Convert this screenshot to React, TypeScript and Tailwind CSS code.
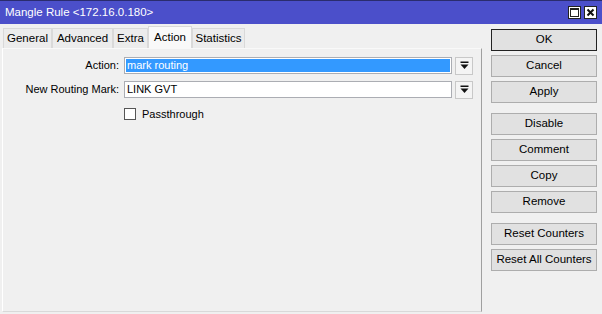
import React from "react";

const tabs: [string, string][] = [
  ["General", "w-[49px]"],
  ["Advanced", "w-[61px]"],
  ["Extra", "w-[35px]"],
  ["Action", "w-[44px]"],
  ["Statistics", "w-[53px]"],
];

function DropArrow() {
  return (
    <div className="w-[18px] h-[18px] ml-[3px] flex items-center justify-center border border-[#c8c8c8] bg-[#f4f4f4]">
      <svg width="9" height="9" viewBox="0 0 9 9">
        <rect x="0.5" y="0.5" width="8" height="1.5" fill="#111" />
        <polygon points="0.5,3.5 8.5,3.5 4.5,8" fill="#111" />
      </svg>
    </div>
  );
}

function Btn({ label, primary }: { label: string; primary?: boolean }) {
  return (
    <button
      className={`w-[106px] h-[22px] flex items-center justify-center bg-[#e1e1e1] text-[11.5px] text-black ${
        primary ? "border-[1.5px] border-[#222]" : "border border-[#adadad]"
      }`}
    >
      {label}
    </button>
  );
}

export default function App() {
  return (
    <div
      className="w-[602px] h-[314px] bg-[#f0f0f0] flex flex-col overflow-hidden text-black"
      style={{ fontFamily: '"Liberation Sans", Arial, sans-serif' }}
    >
      {/* title bar */}
      <div className="h-[24px] bg-[#4b4fca] border-t border-[#2a2c6e] flex items-center pl-[5px] pr-[5px] shrink-0">
        <span className="text-white text-[11.5px] leading-none">Mangle Rule &lt;172.16.0.180&gt;</span>
        <div className="ml-auto flex gap-[3px] items-center">
          <div className="w-[13px] h-[13px] bg-white border border-[#222] flex items-center justify-center">
            <div className="w-[9px] h-[9px] border border-[#222] border-t-2" />
          </div>
          <div className="w-[13px] h-[13px] bg-white border border-[#222] flex items-center justify-center">
            <svg width="9" height="9" viewBox="0 0 9 9">
              <path d="M1.5 1.5 L7.5 7.5 M7.5 1.5 L1.5 7.5" stroke="#111" strokeWidth="2" />
            </svg>
          </div>
        </div>
      </div>

      <div className="flex flex-1">
        {/* left: tabs + panel */}
        <div className="w-[480px] ml-[2px] flex flex-col">
          <div className="h-[24px] flex items-end pl-[1px]">
            {tabs.map(([t, w]) =>
              t === "Action" ? (
                <div
                  key={t}
                  className={`${w} h-[22px] flex items-center justify-center bg-[#f9f9f9] border border-b-0 border-[#d9d9d9] text-[11.5px] z-10`}
                >
                  {t}
                </div>
              ) : (
                <div
                  key={t}
                  className={`${w} h-[20px] flex items-center justify-center bg-[#ececec] border border-b-0 border-[#d9d9d9] text-[11.5px]`}
                >
                  {t}
                </div>
              )
            )}
          </div>
          <div className="flex-1 mb-[2px] border-l border-l-white border-r border-r-[#a0a0a0] border-b border-b-[#d9d9d9] border-t border-t-[#f9f9f9] pt-[8px] flex flex-col">
            <div className="flex items-center h-[17px]">
              <div className="w-[116px] text-right text-[11px]">Action:</div>
              <div className="ml-[5px] w-[328px] h-[17px] border border-[#abadb3] bg-white p-[1px]">
                <div className="w-full h-full bg-[#3399ff] text-white text-[11px] leading-[13px] pl-[1px]">mark routing</div>
              </div>
              <DropArrow />
            </div>
            <div className="flex items-center h-[17px] mt-[7px]">
              <div className="w-[116px] text-right text-[11px]">New Routing Mark:</div>
              <div className="ml-[5px] w-[328px] h-[17px] border border-[#abadb3] bg-white text-[11px] leading-[15px] pl-[2px]">
                LINK GVT
              </div>
              <DropArrow />
            </div>
            <div className="flex items-center mt-[8px] ml-[121px]">
              <div className="w-[12px] h-[12px] border border-[#555] bg-white" />
              <span className="ml-[6px] text-[11px]">Passthrough</span>
            </div>
          </div>
        </div>

        {/* right: buttons */}
        <div className="ml-[9px] pt-[5px] flex flex-col">
          <div className="flex flex-col gap-[4px]">
            <Btn label="OK" primary />
            <Btn label="Cancel" />
            <Btn label="Apply" />
          </div>
          <div className="flex flex-col gap-[4px] mt-[10px]">
            <Btn label="Disable" />
            <Btn label="Comment" />
            <Btn label="Copy" />
            <Btn label="Remove" />
          </div>
          <div className="flex flex-col gap-[4px] mt-[10px]">
            <Btn label="Reset Counters" />
            <Btn label="Reset All Counters" />
          </div>
        </div>
      </div>
    </div>
  );
}
